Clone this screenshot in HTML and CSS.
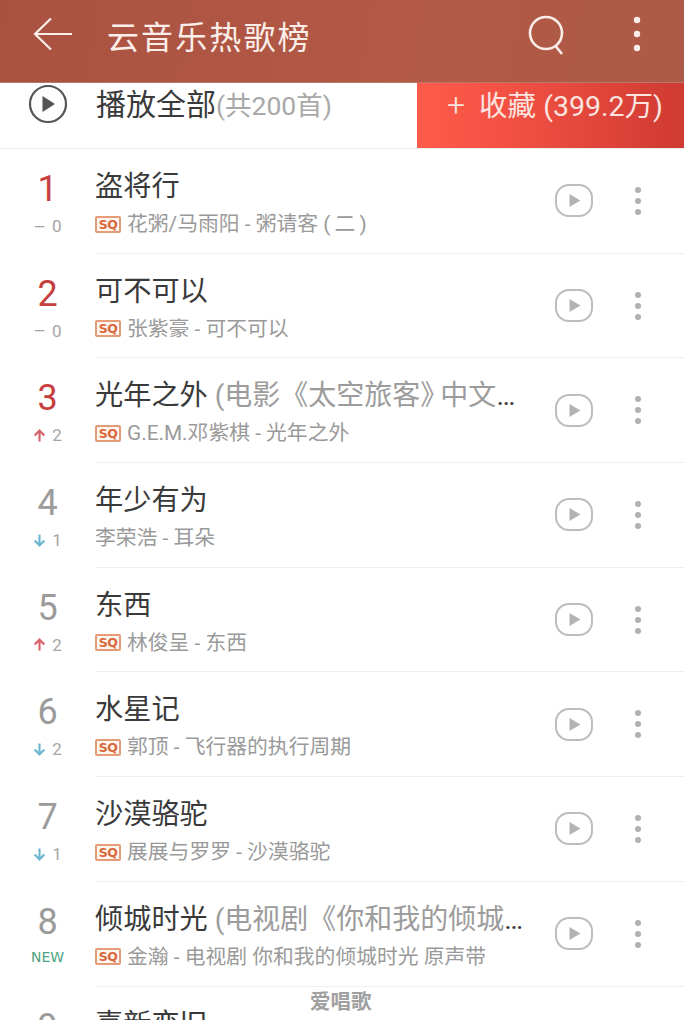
FILE: index.html
```html
<!DOCTYPE html>
<html lang="zh-CN">

<head>
    <meta charset="UTF-8">
    <meta name="viewport" content="width=device-width, initial-scale=1.0">
    <title>云音乐热歌榜</title>
    <link rel="stylesheet" href="styles.css">
</head>

<body>
    <svg class="defs" width="0" height="0">
        <symbol id="play-box" viewBox="0 0 38 33">
            <rect x="1" y="1" width="36" height="31" rx="13" fill="none" stroke="#bdbdbd" stroke-width="2"/>
            <path d="M14.500 10 L25.500 16.500 L14.500 23 Z" fill="#b3b3b3"/>
        </symbol>
        <symbol id="more" viewBox="0 0 10 32">
            <circle cx="5" cy="5" r="3" fill="#b0b0b0"/>
            <circle cx="5" cy="16" r="3" fill="#b0b0b0"/>
            <circle cx="5" cy="27" r="3" fill="#b0b0b0"/>
        </symbol>
        <symbol id="up" viewBox="0 0 12 12">
            <path d="M6 11.500 V1.500 M1.500 6 L6 1.500 L10.500 6" fill="none" stroke="#d9646a" stroke-width="2"/>
        </symbol>
        <symbol id="down" viewBox="0 0 12 12">
            <path d="M6 .5 V10.500 M1.500 6 L6 10.500 L10.500 6" fill="none" stroke="#6db7d0" stroke-width="2"/>
        </symbol>
    </svg>

    <!-- Top bar -->
    <header class="topbar">
        <svg class="back" width="40" height="34" viewBox="0 0 40 34">
            <path d="M39 17 H3 M18 1.500 L2 17 L18 32.500" fill="none" stroke="#fbeeea" stroke-width="2.200"/>
        </svg>
        <h1 class="title">云音乐热歌榜</h1>
        <svg class="search" width="40" height="40" viewBox="0 0 40 40">
            <circle cx="18" cy="18" r="16" fill="none" stroke="#fbeeea" stroke-width="2.600"/>
            <path d="M27.500 31 L34 39" fill="none" stroke="#fbeeea" stroke-width="2.600"/>
        </svg>
        <svg class="topmore" width="10" height="36" viewBox="0 0 10 36">
            <circle cx="5" cy="4" r="3.200" fill="#fbeeea"/>
            <circle cx="5" cy="18" r="3.200" fill="#fbeeea"/>
            <circle cx="5" cy="32" r="3.200" fill="#fbeeea"/>
        </svg>
    </header>

    <!-- Play all -->
    <section class="playall">
        <svg class="playall-icon" width="40" height="40" viewBox="0 0 40 40">
            <circle cx="20" cy="20" r="18" fill="none" stroke="#555" stroke-width="2.200"/>
            <path d="M14.500 12 L27 20 L14.500 28 Z" fill="#555"/>
        </svg>
        <div class="playall-text">播放全部<span class="playall-count">(共200首)</span></div>
        <div class="collect"><span class="collect-plus">+</span>收藏 (399.2万)</div>
    </section>

    <!-- Songs -->
    <ul class="songs">
        <li class="song">
            <div class="rank">
                <div class="rank-num top">1</div>
                <div class="rank-delta"><span class="dash">–</span>0</div>
            </div>
            <div class="song-main">
                <div class="song-info">
                    <div class="song-name">盗将行</div>
                    <div class="song-sub"><span class="sq">SQ</span>花粥/马雨阳 - 粥请客 (&#8201;二&#8201;)</div>
                </div>
                <svg class="play-box"><use href="#play-box"/></svg>
                <svg class="more"><use href="#more"/></svg>
            </div>
        </li>
        <li class="song">
            <div class="rank">
                <div class="rank-num top">2</div>
                <div class="rank-delta"><span class="dash">–</span>0</div>
            </div>
            <div class="song-main">
                <div class="song-info">
                    <div class="song-name">可不可以</div>
                    <div class="song-sub"><span class="sq">SQ</span>张紫豪 - 可不可以</div>
                </div>
                <svg class="play-box"><use href="#play-box"/></svg>
                <svg class="more"><use href="#more"/></svg>
            </div>
        </li>
        <li class="song">
            <div class="rank">
                <div class="rank-num top">3</div>
                <div class="rank-delta"><svg class="arrow"><use href="#up"/></svg>2</div>
            </div>
            <div class="song-main">
                <div class="song-info">
                    <div class="song-name">光年之外 <span class="song-note">(电影《太空旅客<span class="tight">》</span>中文主题曲)</span></div>
                    <div class="song-sub"><span class="sq">SQ</span>G.E.M.邓紫棋 - 光年之外</div>
                </div>
                <svg class="play-box"><use href="#play-box"/></svg>
                <svg class="more"><use href="#more"/></svg>
            </div>
        </li>
        <li class="song">
            <div class="rank">
                <div class="rank-num">4</div>
                <div class="rank-delta"><svg class="arrow"><use href="#down"/></svg>1</div>
            </div>
            <div class="song-main">
                <div class="song-info">
                    <div class="song-name">年少有为</div>
                    <div class="song-sub">李荣浩 - 耳朵</div>
                </div>
                <svg class="play-box"><use href="#play-box"/></svg>
                <svg class="more"><use href="#more"/></svg>
            </div>
        </li>
        <li class="song">
            <div class="rank">
                <div class="rank-num">5</div>
                <div class="rank-delta"><svg class="arrow"><use href="#up"/></svg>2</div>
            </div>
            <div class="song-main">
                <div class="song-info">
                    <div class="song-name">东西</div>
                    <div class="song-sub"><span class="sq">SQ</span>林俊呈 - 东西</div>
                </div>
                <svg class="play-box"><use href="#play-box"/></svg>
                <svg class="more"><use href="#more"/></svg>
            </div>
        </li>
        <li class="song">
            <div class="rank">
                <div class="rank-num">6</div>
                <div class="rank-delta"><svg class="arrow"><use href="#down"/></svg>2</div>
            </div>
            <div class="song-main">
                <div class="song-info">
                    <div class="song-name">水星记</div>
                    <div class="song-sub"><span class="sq">SQ</span>郭顶 - 飞行器的执行周期</div>
                </div>
                <svg class="play-box"><use href="#play-box"/></svg>
                <svg class="more"><use href="#more"/></svg>
            </div>
        </li>
        <li class="song">
            <div class="rank">
                <div class="rank-num">7</div>
                <div class="rank-delta"><svg class="arrow"><use href="#down"/></svg>1</div>
            </div>
            <div class="song-main">
                <div class="song-info">
                    <div class="song-name">沙漠骆驼</div>
                    <div class="song-sub"><span class="sq">SQ</span>展展与罗罗 - 沙漠骆驼</div>
                </div>
                <svg class="play-box"><use href="#play-box"/></svg>
                <svg class="more"><use href="#more"/></svg>
            </div>
        </li>
        <li class="song">
            <div class="rank">
                <div class="rank-num">8</div>
                <div class="rank-new">NEW</div>
            </div>
            <div class="song-main">
                <div class="song-info">
                    <div class="song-name">倾城时光 <span class="song-note">(电视剧《你和我的倾城时光》插曲)</span></div>
                    <div class="song-sub"><span class="sq">SQ</span>金瀚 - 电视剧 你和我的倾城时光 原声带</div>
                </div>
                <svg class="play-box"><use href="#play-box"/></svg>
                <svg class="more"><use href="#more"/></svg>
            </div>
        </li>
        <li class="song">
            <div class="rank">
                <div class="rank-num">9</div>
            </div>
            <div class="song-main">
                <div class="song-info">
                    <div class="song-name">喜新恋旧</div>
                </div>
            </div>
        </li>
    </ul>

    <div class="watermark">爱唱歌</div>
</body>

</html>
```

FILE: styles.css
```css
* {
    box-sizing: border-box;
}

html,
body {
    height: 1020px;
    overflow: hidden;
}

body {
    margin: 0;
    background-color: #fff;
    font-family: Roboto, "Noto Sans CJK SC", sans-serif;
    color: #333;
    position: relative;
}

.defs {
    display: block;
    height: 0;
}

.topbar {
    height: 83px;
    display: flex;
    align-items: center;
    padding: 0 42px 0 33px;
    background: linear-gradient(100deg, #aa5240 0%, #b25a46 60%, #ad5a46 100%);
    box-shadow: inset 0 -1px 0 #b9796a;
}

.back {
    margin-top: -15px;
}

.title {
    margin: -14px auto 0 34px;
    font-size: 32px;
    font-weight: 400;
    letter-spacing: 2.100px;
    color: #fbeeea;
}

.search {
    margin: -13px 64px 0 0;
}

.topmore {
    margin-top: -15px;
}

.playall {
    height: 66px;
    display: flex;
    align-items: flex-start;
    padding-left: 28px;
    border-bottom: 1px solid #ececec;
}

.playall-icon {
    margin-top: 1px;
}

.playall-text {
    margin-left: 28px;
    font-size: 30px;
    line-height: 44px;
    color: #3a3a3a;
}

.playall-count {
    font-size: 26.500px;
    color: #a8a8a8;
}

.collect {
    margin-left: auto;
    width: 267px;
    height: 65px;
    padding: 0 0 0 30px;
    font-size: 28.500px;
    line-height: 44px;
    color: #fbe4df;
    white-space: nowrap;
    background: linear-gradient(90deg, #ff5b4b 0%, #ef4f42 40%, #cf3a32 100%);
}

.collect-plus {
    margin-right: 14px;
    font-size: 32px;
    font-weight: 300;
}

.songs {
    margin: 0;
    padding: 0;
    list-style: none;
}

.song {
    height: 104.700px;
    display: flex;
}

.rank {
    width: 95px;
    flex-shrink: 0;
    padding-top: 15px;
    text-align: center;
}

.rank-num {
    font-size: 36px;
    line-height: 50px;
    color: #9b9b9b;
}

.rank-num.top {
    color: #c73e3e;
}

.rank-delta {
    display: flex;
    align-items: center;
    justify-content: center;
    gap: 6px;
    height: 24px;
    font-size: 17px;
    color: #a5a5a5;
}

.dash {
    font-size: 19px;
    color: #a5a5a5;
}

.arrow {
    width: 13px;
    height: 13px;
}

.rank-new {
    height: 24px;
    margin-top: -2px;
    font-family: "DejaVu Sans", sans-serif;
    font-size: 14px;
    line-height: 24px;
    color: #4da37f;
}

.song-main {
    flex: 1;
    min-width: 0;
    display: flex;
    align-items: center;
    border-bottom: 1px solid #efefef;
}

.song-info {
    flex: 1;
    min-width: 0;
    align-self: flex-start;
    padding-top: 16px;
}

.song-name {
    font-size: 28.200px;
    line-height: 44px;
    color: #3a3a3a;
    white-space: nowrap;
    overflow: hidden;
    text-overflow: ellipsis;
}

.song-note {
    font-size: 28px;
    color: #9c9c9c;
}

.tight {
    letter-spacing: -8px;
}

.song-sub {
    display: flex;
    align-items: center;
    margin-top: -1px;
    font-size: 20.800px;
    line-height: 32px;
    color: #9a9a9a;
    white-space: pre;
}

.sq {
    width: 26px;
    height: 17px;
    margin-right: 6px;
    border: 2px solid #e59a78;
    border-radius: 2px;
    font-family: "DejaVu Sans", sans-serif;
    font-size: 12.500px;
    font-weight: 700;
    line-height: 13px;
    letter-spacing: -.5px;
    text-align: center;
    color: #d9683a;
    background-color: #fdf5ef;
}

.play-box {
    width: 38px;
    height: 33px;
    margin: 0 40px 0 28px;
    flex-shrink: 0;
}

.more {
    width: 10px;
    height: 32px;
    margin-right: 41px;
    flex-shrink: 0;
}

.watermark {
    position: absolute;
    left: 310px;
    top: 987px;
    font-size: 20.500px;
    font-weight: 700;
    line-height: 30px;
    color: #a0a0a0;
    text-shadow: 0 0 2px #fff;
}
```
